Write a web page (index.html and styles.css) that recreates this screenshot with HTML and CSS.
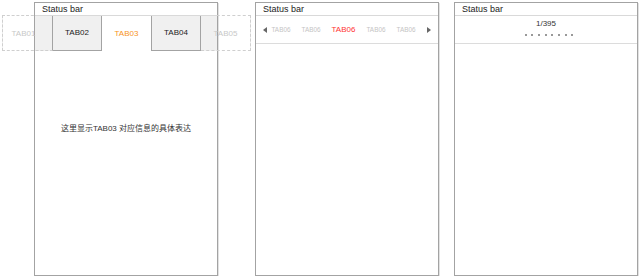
FILE: index.html
```html
<!DOCTYPE html>
<html lang="zh-CN">
<head>
    <meta charset="UTF-8">
    <meta name="viewport" content="width=device-width, initial-scale=1.0">
    <title>Tab patterns</title>
    <link rel="stylesheet" href="styles.css">
</head>
<body>
    <!-- fixed tabs, swipe to reveal the hidden ones -->
    <div class="phone">
        <div class="status">Status bar</div>
        <div class="tab-strip">
            <div class="tab tab-ghost tab-first">TAB01</div>
            <div class="tab tab-off tab-second">TAB02</div>
            <div class="tab tab-on">TAB03</div>
            <div class="tab tab-off tab-fourth">TAB04</div>
            <div class="tab tab-ghost tab-last">TAB05</div>
        </div>
        <p class="content">这里显示TAB03 对应信息的具体表达</p>
    </div>

    <!-- scrolling tabs with arrows -->
    <div class="phone phone-second">
        <div class="status">Status bar</div>
        <div class="scroll-tabs">
            <span class="arrow arrow-left"></span>
            <span class="scroll-item">TAB06</span>
            <span class="scroll-item">TAB06</span>
            <span class="scroll-item scroll-current">TAB06</span>
            <span class="scroll-item">TAB06</span>
            <span class="scroll-item">TAB06</span>
            <span class="arrow arrow-right"></span>
        </div>
    </div>

    <!-- page counter -->
    <div class="phone phone-third">
        <div class="status">Status bar</div>
        <div class="pager">
            <div class="pager-count">1/395</div>
            <div class="pager-dots">
                <span></span><span></span><span></span><span></span>
                <span></span><span></span><span></span><span></span>
            </div>
        </div>
    </div>
</body>
</html>
```

FILE: styles.css
```css
* {
    margin: 0;
    padding: 0;
    box-sizing: border-box;
}

body {
    font-family: "Liberation Sans", "Noto Sans CJK SC", sans-serif;
    background-color: #fff;
    display: flex;
    align-items: flex-start;
    padding: 2px 0 0 34px;
    color: #333;
}

.phone {
    width: 184px;
    height: 274px;
    border: 1px solid #a3a3a3;
    box-shadow: 1px 1px 0 #e2e2e2;
    background: #fff;
}

.phone-second {
    margin-left: 37px;
}

.phone-third {
    margin-left: 15px;
}

.status {
    position: relative;
    z-index: 1;
    height: 13px;
    padding-left: 7px;
    font-size: 9px;
    line-height: 12px;
    color: #222;
    border-bottom: 1px solid #d9d9d9;
}

/* Fixed tabs */
.tab-strip {
    display: flex;
    width: 249px;
    height: 36px;
    margin: -1px 0 0 -33px;
}

.tab {
    display: flex;
    align-items: center;
    justify-content: center;
    font-size: 8px;
}

.tab-ghost {
    color: #c8c8c8;
    border-top: 1px dashed #cfcfcf;
    border-bottom: 1px dashed #cfcfcf;
}

.tab-first {
    width: 51px;
    padding-right: 8px;
    border-left: 1px dashed #cfcfcf;
    border-right: 1px solid #a3a3a3;
    background: linear-gradient(to right, transparent 32px, #f0f0f0 32px);
}

.tab-last {
    width: 50px;
    border-right: 1px dashed #cfcfcf;
    background: linear-gradient(to right, #f0f0f0 16px, transparent 16px);
}

.tab-off {
    background: #f0f0f0;
    color: #222;
    border-bottom: 1px solid #a3a3a3;
}

.tab-second {
    width: 49px;
    border-right: 1px solid #a3a3a3;
}

.tab-fourth {
    width: 50px;
    border-left: 1px solid #a3a3a3;
    border-right: 1px solid #a3a3a3;
}

.tab-on {
    width: 49px;
    color: #f7941d;
}

.content {
    margin-top: 72px;
    text-align: center;
    font-size: 8px;
    line-height: 12px;
    color: #333;
}

/* Scrolling tabs */
.scroll-tabs {
    display: flex;
    align-items: center;
    justify-content: center;
    gap: 11px;
    height: 28px;
    border-bottom: 1px solid #dcdcdc;
}

.scroll-item {
    font-size: 6.4px;
    color: #c4c4c4;
}

.scroll-current {
    font-size: 8px;
    color: #ff3333;
}

.arrow {
    width: 0;
    height: 0;
    border-top: 3px solid transparent;
    border-bottom: 3px solid transparent;
}

.arrow-left {
    border-right: 4px solid #666;
    margin-right: -7px;
}

.arrow-right {
    border-left: 4px solid #666;
}

/* Page counter */
.pager {
    display: flex;
    flex-direction: column;
    align-items: center;
    gap: 5px;
    height: 28px;
    padding-top: 3px;
    border-bottom: 1px solid #dcdcdc;
}

.pager-count {
    font-size: 8px;
    line-height: 10px;
    color: #333;
}

.pager-dots {
    display: flex;
    gap: 4.7px;
    margin-left: 6px;
}

.pager-dots span {
    width: 2px;
    height: 2px;
    background: #999;
}
```
